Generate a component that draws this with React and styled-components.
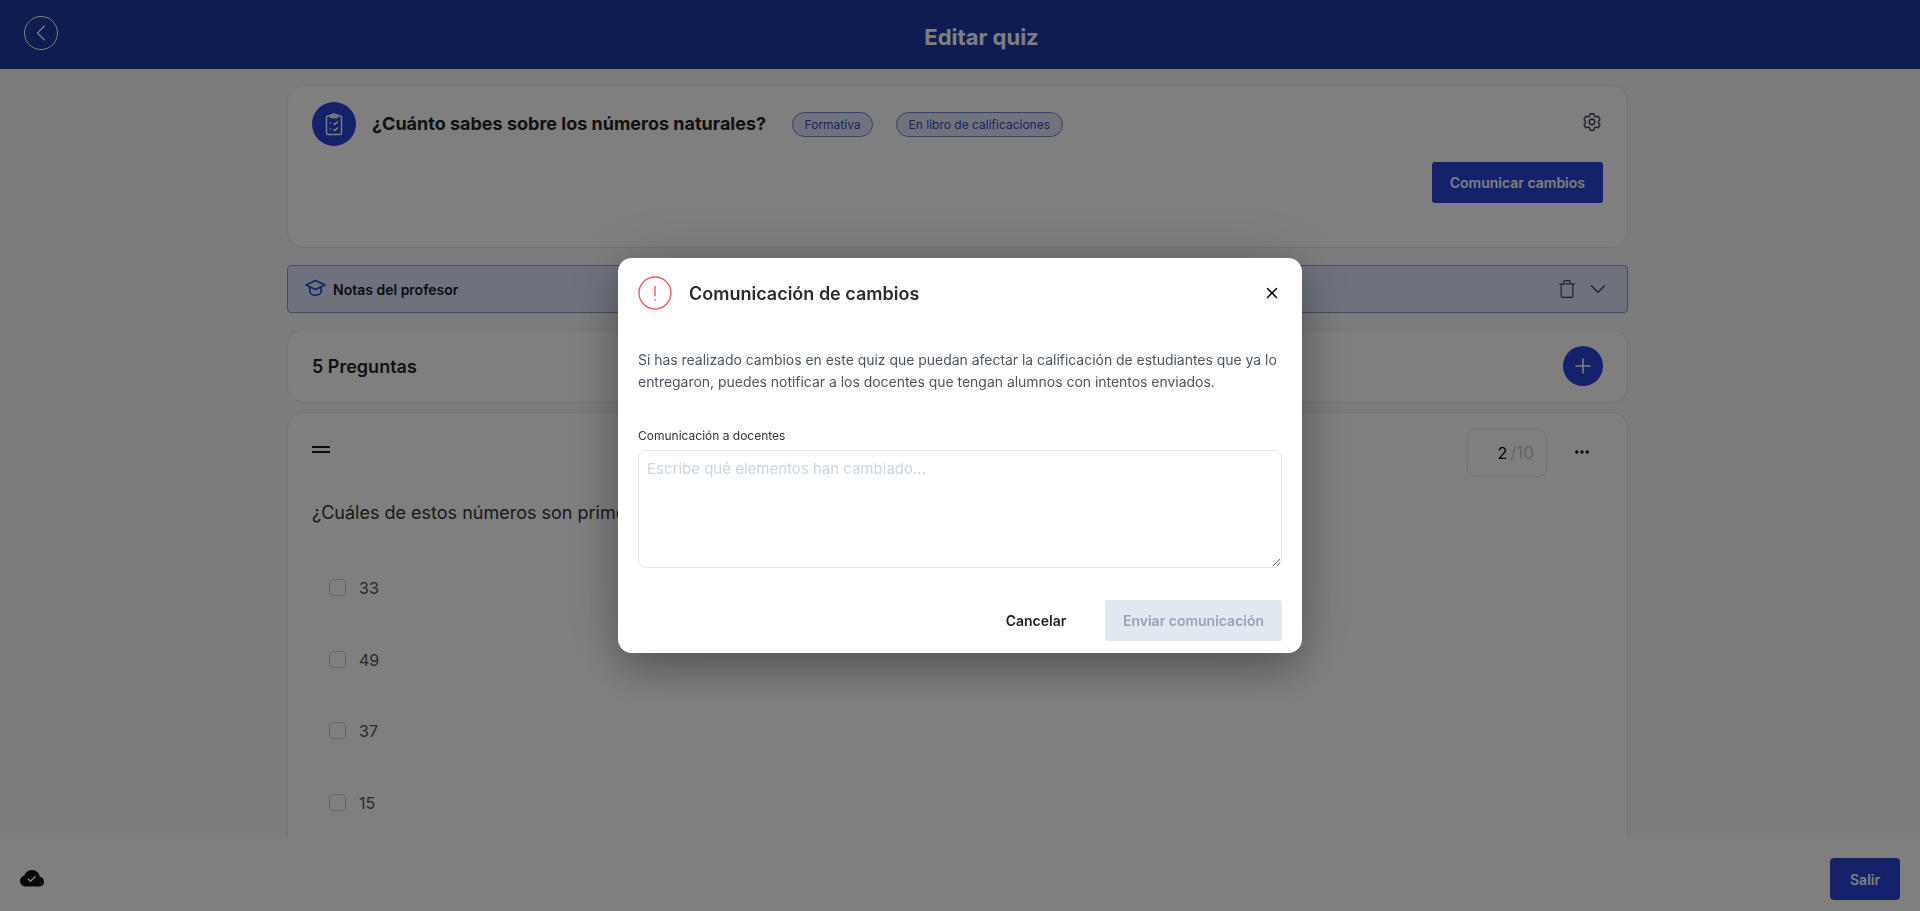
import styled, { createGlobalStyle } from "styled-components";
import { ChevronLeft, ChevronDown, Plus, X, Trash, Ellipsis } from "lucide-react";
import { BsCloudCheckFill } from "react-icons/bs";

const primary = "#2644d6";
const navy = "#1e38a4";

const GlobalStyle = createGlobalStyle`
  * {
    box-sizing: border-box;
  }
  html, body {
    margin: 0;
    height: 100%;
  }
  body {
    font-family: Inter, "Liberation Sans", sans-serif;
    color: #1f2937;
    overflow: hidden;
  }
`;

const Shell = styled.div`
  position: relative;
  height: 100vh;
  display: flex;
  flex-direction: column;
  background: #f8f9fb;
`;

const TopBar = styled.header`
  flex: none;
  height: 69px;
  display: flex;
  align-items: center;
  justify-content: center;
  position: relative;
  padding: 4px 0 0 43px;
  background: ${navy};
`;

const BackButton = styled.button`
  position: absolute;
  left: 24px;
  top: 16px;
  width: 34px;
  height: 34px;
  padding: 0;
  display: flex;
  align-items: center;
  justify-content: center;
  color: #fff;
  background: none;
  border: 1px solid #fff;
  border-radius: 50%;
`;

const PageTitle = styled.h1`
  margin: 0;
  font-size: 22px;
  line-height: 28px;
  font-weight: 700;
  color: #fff;
`;

const Scroller = styled.main`
  flex: 1;
  overflow-y: scroll;
  padding: 16px 0 90px;

  &::-webkit-scrollbar {
    width: 5px;
  }
  &::-webkit-scrollbar-thumb {
    background: #dcdde0;
  }
`;

const Column = styled.div`
  width: 1341px;
  margin-left: 287px;
  display: flex;
  flex-direction: column;
  gap: 9px;
`;

const Card = styled.section`
  background: #fff;
  border: 1px solid #e6e8ec;
  border-radius: 16px;
`;

const QuizCard = styled(Card)`
  height: 163px;
  margin-bottom: 8px;
  padding: 16px 24px 0;
`;

const QuizTop = styled.div`
  display: flex;
  align-items: flex-start;
  height: 60px;
`;

const QuizBadge = styled.div`
  width: 44px;
  height: 44px;
  flex: none;
  display: flex;
  align-items: center;
  justify-content: center;
  border-radius: 50%;
  background: ${primary};
  color: #fff;
`;

const QuizName = styled.h2`
  margin: 10px 26px 0 16px;
  font-size: 18px;
  line-height: 24px;
  font-weight: 700;
  color: #222;
  white-space: nowrap;
`;

const Pill = styled.span`
  height: 25px;
  margin: 10px 23px 0 0;
  padding: 0 11.5px;
  display: flex;
  align-items: center;
  font-size: 12px;
  color: #3548b8;
  background: #e0e6fd;
  border: 1px solid #6f80d0;
  border-radius: 13px;
`;

const GearButton = styled.span`
  margin: 9px 0 0 auto;
  color: #374151;
  line-height: 0;
`;

const QuizActions = styled.div`
  display: flex;
  justify-content: flex-end;
`;

const PrimaryButton = styled.button`
  height: 41px;
  padding: 0 18px;
  font-family: inherit;
  font-size: 14px;
  font-weight: 600;
  color: #fff;
  background: ${primary};
  border: 0;
  border-radius: 3px;
`;

const NotesBar = styled.div`
  height: 48px;
  margin-bottom: 7px;
  padding: 0 16px 0 17px;
  display: flex;
  align-items: center;
  background: #dfe4fb;
  border: 1px solid #8a97c8;
  border-radius: 4px;
`;

const NotesLabel = styled.span`
  margin-left: 7px;
  font-size: 14px;
  font-weight: 600;
  color: #111827;
`;

const NotesIcon = styled.span`
  line-height: 0;
  color: ${primary};
  margin-top: -3px;
`;

const NotesTools = styled.div`
  margin-left: auto;
  display: flex;
  align-items: center;
  gap: 8px;
  color: #374151;
`;

const CountCard = styled(Card)`
  height: 74px;
  padding: 0 24px;
  display: flex;
  align-items: center;
  justify-content: space-between;
`;

const CountTitle = styled.h3`
  margin: 0;
  font-size: 18px;
  font-weight: 600;
  color: #222;
`;

const RoundAdd = styled.button`
  width: 40px;
  height: 40px;
  padding: 0;
  display: flex;
  align-items: center;
  justify-content: center;
  color: #fff;
  background: ${primary};
  border: 0;
  border-radius: 50%;
`;

const QuestionCard = styled(Card)`
  min-height: 3010px;
  padding: 16px 24px;
`;

const QuestionHead = styled.div`
  display: flex;
  align-items: flex-start;
`;

const DragHandle = styled.svg`
  width: 18px;
  height: 7px;
  margin-top: 17px;
`;

const ScoreBox = styled.div`
  width: 80px;
  height: 48px;
  margin-left: auto;
  padding-right: 12px;
  display: flex;
  align-items: center;
  justify-content: flex-end;
  font-size: 16px;
  color: #000;
  border: 1px solid #e5e7eb;
  border-radius: 8px;
`;

const ScoreMax = styled.span`
  margin-left: 3px;
  font-size: 17px;
  color: #c8ccd2;
`;

const MoreButton = styled.span`
  width: 70px;
  height: 48px;
  display: flex;
  align-items: center;
  justify-content: center;
  margin-right: -14px;
  margin-top: -1px;
  color: #111;
`;

const QuestionText = styled.p`
  margin: 23px 0 52px;
  font-size: 18px;
  line-height: 26px;
  color: #333;
`;

const OptionRow = styled.label`
  height: 71.7px;
  padding-left: 17px;
  display: flex;
  align-items: flex-start;
  gap: 13px;
  font-size: 16px;
  line-height: 20px;
  color: #4b5563;
`;

const Check = styled.span`
  width: 17px;
  height: 17px;
  flex: none;
  margin-top: 1px;
  border: 1.5px solid #cbd0d6;
  border-radius: 4px;
`;

const BottomBar = styled.footer`
  position: absolute;
  left: 0;
  right: 0;
  bottom: 0;
  height: 73px;
  padding: 9px 20px 0 20px;
  display: flex;
  align-items: center;
  justify-content: space-between;
  background: #fff;
  color: #111;
`;

const ExitButton = styled(PrimaryButton)`
  width: 70px;
  height: 42px;
  padding: 0;
  border-radius: 4px;
`;

const Backdrop = styled.div`
  position: fixed;
  inset: 0;
  background: rgba(0, 0, 0, 0.5);
`;

const Dialog = styled.div`
  position: absolute;
  left: 618px;
  top: 258px;
  width: 684px;
  height: 395px;
  padding: 18px 20px 12px;
  display: flex;
  flex-direction: column;
  background: #fff;
  border-radius: 14px;
  box-shadow: 0 16px 40px rgba(0, 0, 0, 0.28), 0 0 70px rgba(0, 0, 0, 0.12);
`;

const DialogHead = styled.div`
  display: flex;
  align-items: center;
  height: 34px;
  margin-bottom: 39px;
`;

const AlertMark = styled.span`
  flex: none;
  line-height: 0;
`;

const DialogTitle = styled.h2`
  margin: 0 0 0 17px;
  font-size: 18px;
  font-weight: 600;
  color: #2b2b2b;
`;

const CloseButton = styled.button`
  margin-left: auto;
  margin-right: 1px;
  padding: 0;
  line-height: 0;
  color: #000;
  background: none;
  border: 0;
`;

const DialogText = styled.p`
  margin: 0 0 35px;
  font-size: 14px;
  line-height: 22px;
  letter-spacing: -0.03px;
  color: #4b5563;
`;

const FieldLabel = styled.label`
  margin-bottom: 7px;
  font-size: 12px;
  line-height: 15px;
  color: #333;
`;

const Message = styled.textarea`
  flex: none;
  height: 118px;
  padding: 8px;
  font-family: inherit;
  font-size: 15px;
  line-height: 20px;
  border: 1px solid #e5e7eb;
  border-radius: 8px;
  outline: none;

  &::placeholder {
    color: #cbd5e1;
  }
`;

const DialogActions = styled.div`
  margin-top: 32px;
  display: flex;
  justify-content: flex-end;
  align-items: center;
`;

const TextButton = styled.button`
  height: 41px;
  width: 100px;
  margin-right: 19px;
  padding: 0;
  font-family: inherit;
  font-size: 14px;
  font-weight: 600;
  color: #222;
  background: none;
  border: 0;
`;

const DisabledButton = styled.button`
  width: 177px;
  height: 41px;
  padding: 0;
  font-family: inherit;
  font-size: 14px;
  font-weight: 600;
  color: #94a3b8;
  background: #e2e8f0;
  border: 0;
  border-radius: 3px;
`;

const ClipboardIcon = () => (
  <svg width="20" height="24" viewBox="0 0 20 24" fill="none" stroke="currentColor" strokeWidth="1.4">
    <rect x="2.5" y="4" width="15" height="18.5" rx="1.5" />
    <path d="M7 4V2.8h1.8a1.3 1.3 0 0 1 2.4 0H13V4v1.5H7z" />
    <path d="M5.8 10.8h1.2M5.8 16.8h1.2M9.5 11l1.4 1.4 3-3M9.5 17l1.4 1.4 3-3" />
  </svg>
);

const CapIcon = () => (
  <svg width="21" height="18" viewBox="0 0 21 18" fill="none" stroke="currentColor" strokeWidth="1.7" strokeLinejoin="round" strokeLinecap="round">
    <path d="M10.5 1.5 1 6l9.5 4.5L20 6z" />
    <path d="M4.8 8v4.2c0 2.4 2.7 4 5.7 4s5.7-1.6 5.7-4V8" />
  </svg>
);

const GearIcon = () => (
  <svg width="22" height="22" viewBox="0 0 24 24" fill="none" stroke="currentColor" strokeWidth="1.5" strokeLinecap="round" strokeLinejoin="round">
    <path d="M9.594 3.94c.09-.542.56-.94 1.11-.94h2.593c.55 0 1.02.398 1.11.94l.213 1.281c.063.374.313.686.645.87.074.04.147.083.22.127.324.196.72.257 1.075.124l1.217-.456a1.125 1.125 0 0 1 1.37.49l1.296 2.247a1.125 1.125 0 0 1-.26 1.431l-1.003.827c-.293.24-.438.613-.431.992a6.759 6.759 0 0 1 0 .255c-.007.378.138.75.43.99l1.005.828c.424.35.534.954.26 1.43l-1.298 2.247a1.125 1.125 0 0 1-1.369.491l-1.217-.456c-.355-.133-.75-.072-1.076.124a6.57 6.57 0 0 1-.22.128c-.331.183-.581.495-.644.869l-.213 1.28c-.09.543-.56.941-1.11.941h-2.594c-.55 0-1.02-.398-1.11-.94l-.213-1.281c-.062-.374-.312-.686-.644-.87a6.52 6.52 0 0 1-.22-.127c-.325-.196-.72-.257-1.076-.124l-1.217.456a1.125 1.125 0 0 1-1.369-.49l-1.297-2.247a1.125 1.125 0 0 1 .26-1.431l1.004-.827c.292-.24.437-.613.43-.992a6.932 6.932 0 0 1 0-.255c.007-.378-.138-.75-.43-.99l-1.004-.828a1.125 1.125 0 0 1-.26-1.43l1.297-2.247a1.125 1.125 0 0 1 1.37-.491l1.216.456c.356.133.751.072 1.076-.124.072-.044.146-.087.22-.128.332-.183.582-.495.644-.869l.214-1.281Z" />
    <path d="M15 12a3 3 0 1 1-6 0 3 3 0 0 1 6 0Z" />
  </svg>
);

const AlertIcon = () => (
  <svg width="34" height="34" viewBox="0 0 34 34" fill="none" stroke="#ef5b63" strokeWidth="1.4">
    <circle cx="17" cy="17" r="16" />
    <path d="M17 10v10" />
    <path d="M17 23v1.4" strokeWidth="1.6" />
  </svg>
);

const options = ["33", "49", "37", "15"];

export default function App() {
  return (
    <Shell>
      <GlobalStyle />
      <TopBar>
        <BackButton aria-label="Volver">
          <ChevronLeft size={28} strokeWidth={1} />
        </BackButton>
        <PageTitle>Editar quiz</PageTitle>
      </TopBar>

      <Scroller>
        <Column>
          <QuizCard>
            <QuizTop>
              <QuizBadge>
                <ClipboardIcon />
              </QuizBadge>
              <QuizName>¿Cuánto sabes sobre los números naturales?</QuizName>
              <Pill>Formativa</Pill>
              <Pill>En libro de calificaciones</Pill>
              <GearButton>
                <GearIcon />
              </GearButton>
            </QuizTop>
            <QuizActions>
              <PrimaryButton>Comunicar cambios</PrimaryButton>
            </QuizActions>
          </QuizCard>

          <NotesBar>
            <NotesIcon>
              <CapIcon />
            </NotesIcon>
            <NotesLabel>Notas del profesor</NotesLabel>
            <NotesTools>
              <Trash size={20} strokeWidth={1.4} />
              <ChevronDown size={26} strokeWidth={1.1} />
            </NotesTools>
          </NotesBar>

          <CountCard>
            <CountTitle>5 Preguntas</CountTitle>
            <RoundAdd aria-label="Añadir pregunta">
              <Plus size={24} strokeWidth={1.6} />
            </RoundAdd>
          </CountCard>

          <QuestionCard>
            <QuestionHead>
              <DragHandle viewBox="0 0 18 7">
                <path d="M0 1h18M0 6h18" stroke="#1a1a1a" strokeWidth="2" />
              </DragHandle>
              <ScoreBox>
                2<ScoreMax>/10</ScoreMax>
              </ScoreBox>
              <MoreButton>
                <Ellipsis size={18} strokeWidth={2.4} />
              </MoreButton>
            </QuestionHead>
            <QuestionText>¿Cuáles de estos números son primos?</QuestionText>
            {options.map((value) => (
              <OptionRow key={value}>
                <Check />
                {value}
              </OptionRow>
            ))}
          </QuestionCard>
        </Column>
      </Scroller>

      <BottomBar>
        <BsCloudCheckFill size={24} />
        <ExitButton>Salir</ExitButton>
      </BottomBar>

      <Backdrop>
        <Dialog>
          <DialogHead>
            <AlertMark>
              <AlertIcon />
            </AlertMark>
            <DialogTitle>Comunicación de cambios</DialogTitle>
            <CloseButton aria-label="Cerrar">
              <X size={18} strokeWidth={2} />
            </CloseButton>
          </DialogHead>
          <DialogText>
            Si has realizado cambios en este quiz que puedan afectar la calificación de estudiantes que ya lo
            entregaron, puedes notificar a los docentes que tengan alumnos con intentos enviados.
          </DialogText>
          <FieldLabel>Comunicación a docentes</FieldLabel>
          <Message placeholder="Escribe qué elementos han cambiado..." />
          <DialogActions>
            <TextButton>Cancelar</TextButton>
            <DisabledButton>Enviar comunicación</DisabledButton>
          </DialogActions>
        </Dialog>
      </Backdrop>
    </Shell>
  );
}
